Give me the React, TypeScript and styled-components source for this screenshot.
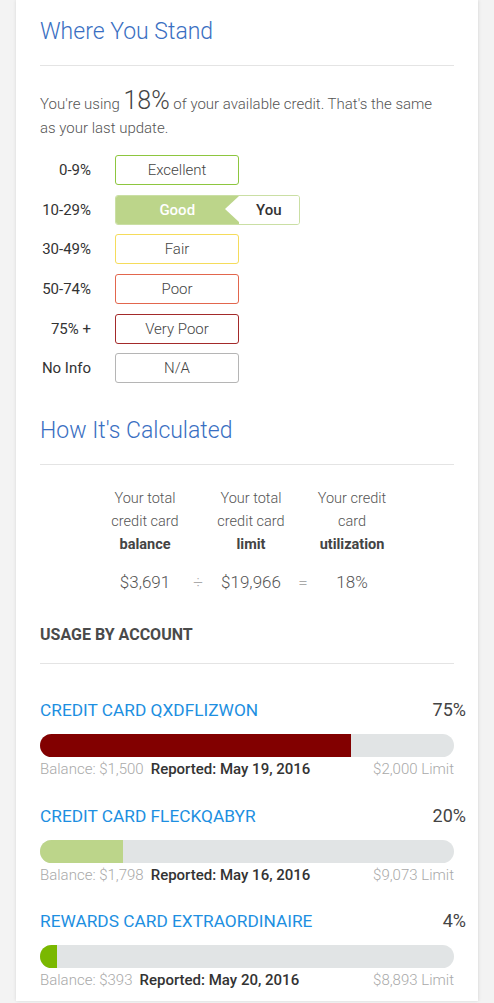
import React from "react";
import styled, { createGlobalStyle } from "styled-components";

const Global = createGlobalStyle`
  html, body { margin: 0; padding: 0; background: #f3f3f3; }
  body { font-family: Roboto, "Liberation Sans", sans-serif; color: #555; }
  * { box-sizing: border-box; }
`;

const Page = styled.div`
  padding: 0 16px 2px 16px;
  border-bottom: 1px solid #d9d9d9;
`;

const Card = styled.div`
  background: #fff;
  padding: 18px 24px 12px 24px;
  box-shadow: 1px 0 3px rgba(0, 0, 0, 0.08), -1px 0 3px rgba(0, 0, 0, 0.05);
`;

const Title = styled.h2<{ $top?: number }>`
  margin: ${(p) => p.$top ?? 0}px 0 0 0;
  font-size: 23px;
  line-height: 28px;
  font-weight: 300;
  color: #3a6fc2;
`;

const Divider = styled.div<{ $top: number }>`
  height: 1px;
  background: #e4e4e4;
  margin-top: ${(p) => p.$top}px;
`;

const Intro = styled.p`
  margin: 26px 0 0 0;
  max-width: 404px;
  font-size: 15px;
  line-height: 24px;
  font-weight: 300;
  color: #555;
`;

const Big = styled.span`
  font-size: 25px;
  line-height: 17px;
  font-weight: 300;
  color: #444;
`;

const Ratings = styled.div`
  margin-top: 15px;
  display: grid;
  grid-template-columns: 51px auto;
  column-gap: 24px;
  row-gap: 9.7px;
  align-items: center;
  justify-content: start;
`;

const RangeLabel = styled.div`
  text-align: right;
  font-size: 15px;
  font-weight: 400;
  color: #333;
  white-space: nowrap;
`;

const RatingBox = styled.div<{ $color: string }>`
  width: 124px;
  height: 30px;
  border: 1.5px solid ${(p) => p.$color};
  border-radius: 3px;
  display: flex;
  align-items: center;
  justify-content: center;
  font-size: 15px;
  font-weight: 300;
  color: #444;
`;

const CurrentBox = styled.div`
  width: 185px;
  height: 30px;
  border: 1.5px solid #cadfa4;
  border-radius: 3px;
  display: flex;
  overflow: hidden;
`;

const CurrentFill = styled.div`
  width: 122.5px;
  background: #bcd58a;
  color: #fff;
  font-weight: 500;
  font-size: 15px;
  display: flex;
  align-items: center;
  justify-content: center;
`;

const YouTag = styled.div`
  flex: 1;
  position: relative;
  background: #fff;
  display: flex;
  align-items: center;
  justify-content: center;
  font-size: 15px;
  font-weight: 500;
  color: #333;
  &::before {
    content: "";
    position: absolute;
    left: -14px;
    top: 0;
    border-top: 13.5px solid transparent;
    border-bottom: 13.5px solid transparent;
    border-right: 14px solid #fff;
  }
`;

const CalcGrid = styled.div`
  margin-top: 22px;
  display: grid;
  grid-template-columns: 86px 20px 86px 18px 80px;
  justify-content: center;
  text-align: center;
  font-size: 14.5px;
  color: #555;
`;

const CalcLabel = styled.div`
  font-weight: 300;
  line-height: 23px;
`;

const CalcStrong = styled.span`
  display: block;
  font-weight: 700;
  color: #444;
`;

const CalcValue = styled.div<{ $op?: boolean }>`
  margin-top: 14px;
  font-size: 17px;
  line-height: 24px;
  font-weight: 300;
  color: ${(p) => (p.$op ? "#aaa" : "#555")};
`;

const SubHead = styled.h3`
  margin: 31px 0 0 0;
  font-size: 16px;
  line-height: 20px;
  font-weight: 700;
  color: #4a4a4a;
`;

const Accounts = styled.div`
  margin-top: 36px;
  display: flex;
  flex-direction: column;
  gap: 27.5px;
`;

const Account = styled.div`
  display: flex;
  flex-direction: column;
`;

const AccountHead = styled.div`
  display: flex;
  justify-content: space-between;
  align-items: center;
  margin-right: -12px;
  line-height: 20px;
`;

const AccountName = styled.a`
  font-size: 17.3px;
  font-weight: 400;
  color: #1d8fe1;
  text-decoration: none;
  text-transform: uppercase;
`;

const AccountPct = styled.span`
  font-size: 18px;
  font-weight: 400;
  color: #444;
`;

const Track = styled.div`
  margin-top: 14px;
  height: 23px;
  border-radius: 12px;
  background: #e1e4e5;
  overflow: hidden;
  display: flex;
`;

const Fill = styled.div<{ $color: string }>`
  height: 100%;
  background: ${(p) => p.$color};
`;

const Info = styled.div`
  margin-top: 3px;
  display: flex;
  align-items: center;
  font-size: 15px;
  line-height: 18px;
`;

const Muted = styled.span`
  font-weight: 300;
  color: #a9a9a9;
`;

const Reported = styled.span`
  margin-left: 7px;
  font-weight: 500;
  color: #333;
`;

const Limit = styled(Muted)`
  margin-left: auto;
`;

const ratings = [
  { range: "0-9%", label: "Excellent", color: "#8dc63f" },
  { range: "10-29%", label: "Good", color: "", current: true },
  { range: "30-49%", label: "Fair", color: "#f5dc5b" },
  { range: "50-74%", label: "Poor", color: "#e2664d" },
  { range: "75% +", label: "Very Poor", color: "#a32a2a" },
  { range: "No Info", label: "N/A", color: "#b5b5b5" },
];

const accounts = [
  { name: "Credit Card QXDFLIZWON", pct: 75, color: "#820000", balance: "$1,500", date: "May 19, 2016", limit: "$2,000" },
  { name: "Credit Card FLECKQABYR", pct: 20, color: "#bcd58a", balance: "$1,798", date: "May 16, 2016", limit: "$9,073" },
  { name: "Rewards Card Extraordinaire", pct: 4, color: "#7ab800", balance: "$393", date: "May 20, 2016", limit: "$8,893" },
];

export default function App() {
  return (
    <>
      <Global />
      <Page>
        <Card>
          <Title>Where You Stand</Title>
          <Divider $top={19} />
          <Intro>
            You're using <Big>18%</Big> of your available credit. That's the same as your last update.
          </Intro>
          <Ratings>
            {ratings.map((r) => (
              <React.Fragment key={r.range}>
                <RangeLabel>{r.range}</RangeLabel>
                {r.current ? (
                  <CurrentBox>
                    <CurrentFill>{r.label}</CurrentFill>
                    <YouTag>You</YouTag>
                  </CurrentBox>
                ) : (
                  <RatingBox $color={r.color}>{r.label}</RatingBox>
                )}
              </React.Fragment>
            ))}
          </Ratings>

          <Title $top={34}>How It's Calculated</Title>
          <Divider $top={19} />
          <CalcGrid>
            <CalcLabel>
              Your total credit card <CalcStrong>balance</CalcStrong>
            </CalcLabel>
            <div />
            <CalcLabel>
              Your total credit card <CalcStrong>limit</CalcStrong>
            </CalcLabel>
            <div />
            <CalcLabel>
              Your credit card <CalcStrong>utilization</CalcStrong>
            </CalcLabel>
            <CalcValue>$3,691</CalcValue>
            <CalcValue $op>÷</CalcValue>
            <CalcValue>$19,966</CalcValue>
            <CalcValue $op>=</CalcValue>
            <CalcValue>18%</CalcValue>
          </CalcGrid>

          <SubHead>USAGE BY ACCOUNT</SubHead>
          <Divider $top={18} />
          <Accounts>
            {accounts.map((a) => (
              <Account key={a.name}>
                <AccountHead>
                  <AccountName href="#">{a.name}</AccountName>
                  <AccountPct>{a.pct}%</AccountPct>
                </AccountHead>
                <Track>
                  <Fill $color={a.color} style={{ width: `${a.pct}%` }} />
                </Track>
                <Info>
                  <Muted>Balance: {a.balance}</Muted>
                  <Reported>Reported: {a.date}</Reported>
                  <Limit>{a.limit} Limit</Limit>
                </Info>
              </Account>
            ))}
          </Accounts>
        </Card>
      </Page>
    </>
  );
}
